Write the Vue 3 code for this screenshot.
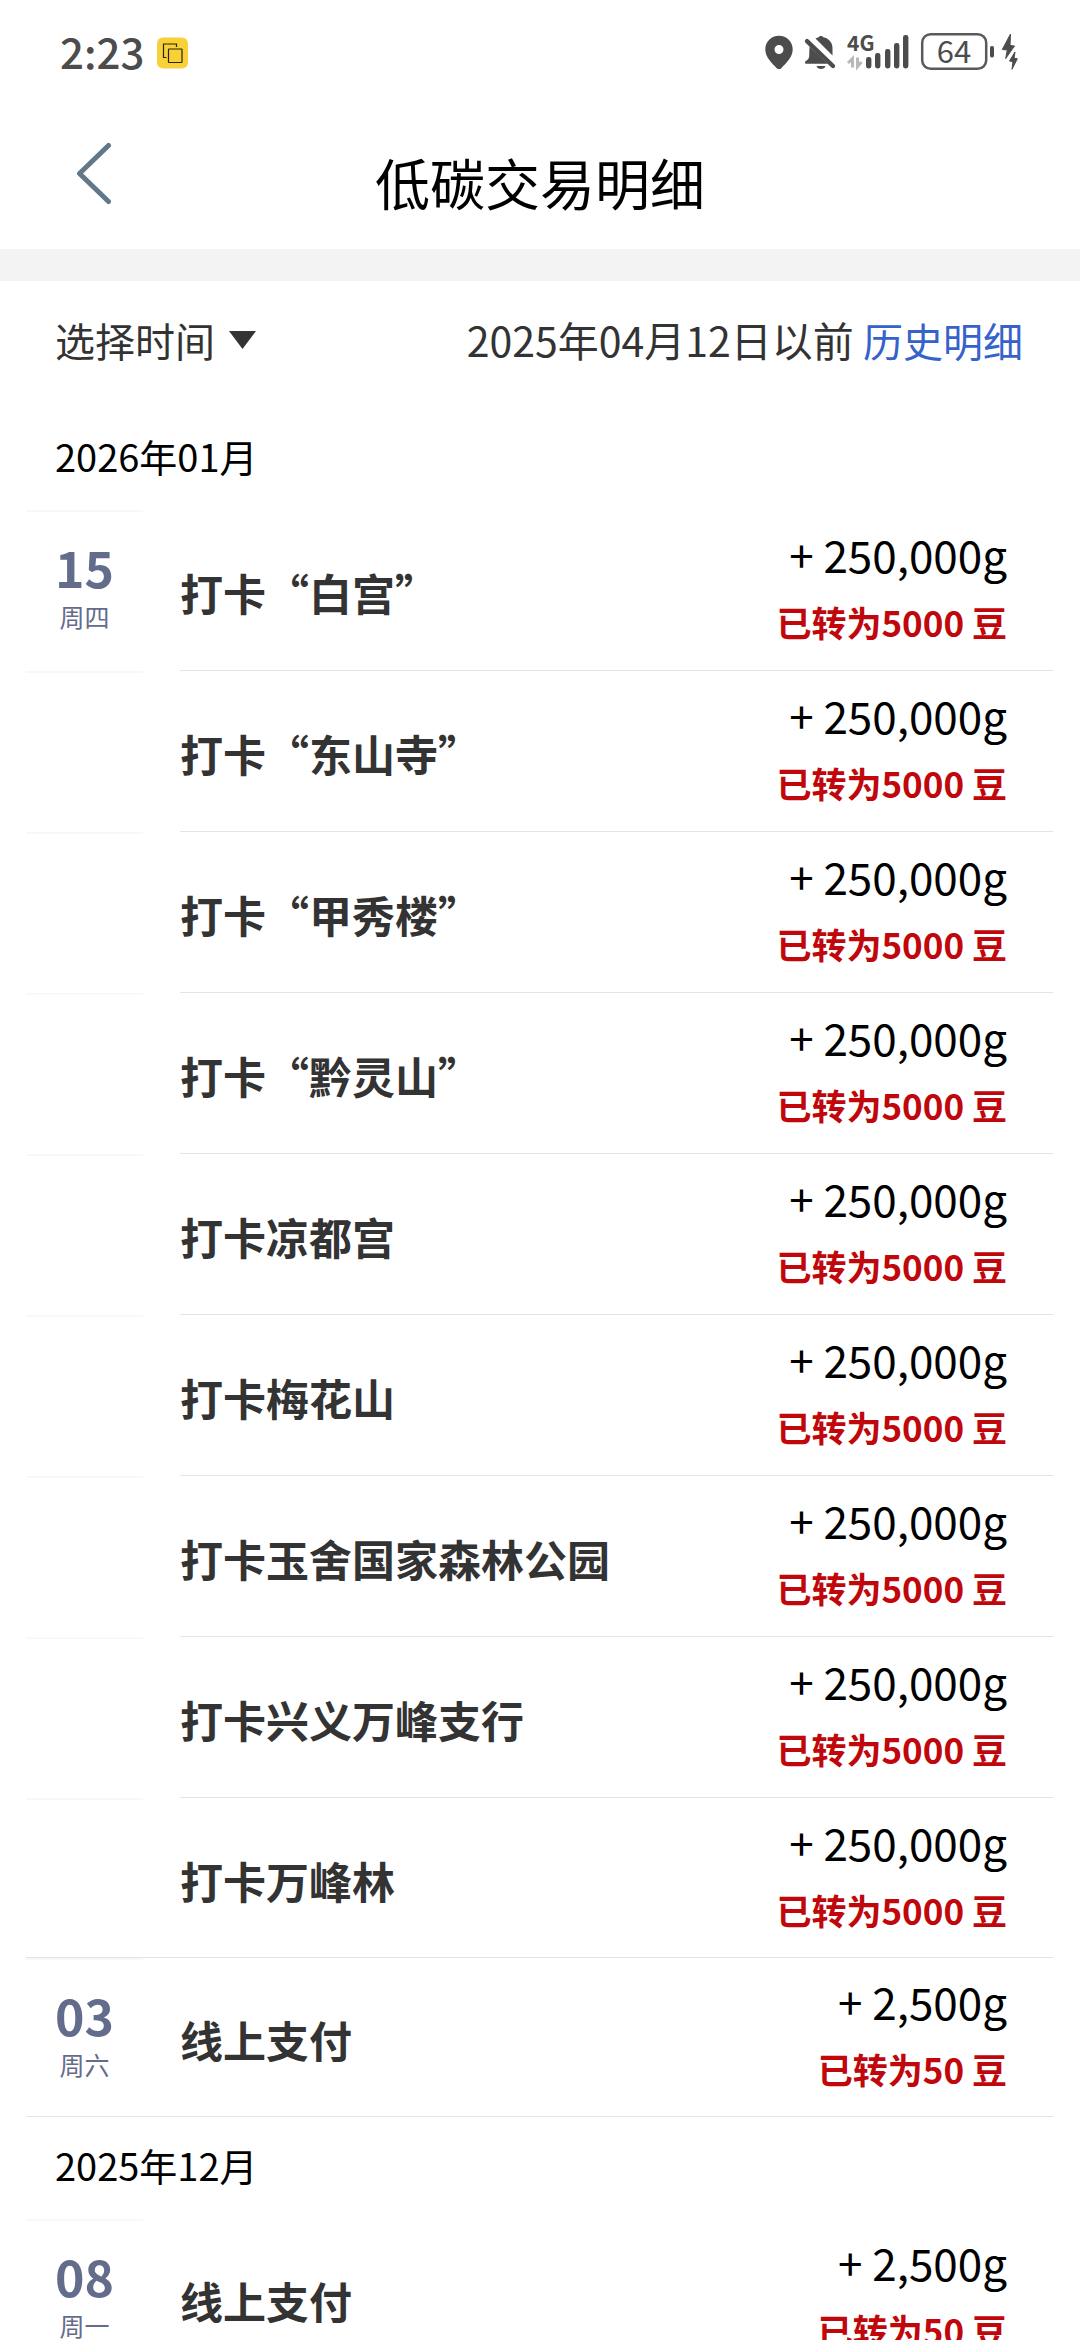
<script setup>
const bars = [
  { x: 866, y: 57 },
  { x: 875, y: 53 },
  { x: 885, y: 49 },
  { x: 894, y: 43 },
  { x: 903, y: 35 }
]

const checkIn = (title) => ({ title, amount: '250,000g', beans: 5000 })
const payment = () => ({ title: '线上支付', amount: '2,500g', beans: 50 })

const months = [
  {
    label: '2026年01月',
    days: [
      {
        day: '15',
        week: '周四',
        records: [
          checkIn('打卡“白宫”'),
          checkIn('打卡“东山寺”'),
          checkIn('打卡“甲秀楼”'),
          checkIn('打卡“黔灵山”'),
          checkIn('打卡凉都宫'),
          checkIn('打卡梅花山'),
          checkIn('打卡玉舍国家森林公园'),
          checkIn('打卡兴义万峰支行'),
          checkIn('打卡万峰林')
        ]
      },
      { day: '03', week: '周六', records: [payment()] }
    ]
  },
  {
    label: '2025年12月',
    days: [{ day: '08', week: '周一', records: [payment()] }]
  }
]
</script>

<template>
  <div class="app">
    <div class="status">
      <div class="status-left">
        <span class="clock">2:23</span>
        <svg class="badge" width="31" height="32" viewBox="0 0 31 32" aria-hidden="true">
          <rect width="31" height="31" y="0.5" rx="6" fill="#f8d038" />
          <g fill="none" stroke="#2b2408" stroke-width="1.2">
            <path d="M9.500 20.500H6.500V7H19.500V10" />
            <rect x="11.500" y="12" width="13.500" height="13.500" rx="0.5" />
          </g>
        </svg>
      </div>
      <svg width="256" height="60" viewBox="764 23 256 60" aria-hidden="true">
        <path fill="#4c4c4c" fill-rule="evenodd" d="M779 35.700c-7.800 0-13.700 6-13.700 13.500 0 8 6.700 14 11.200 18.700 1.500 1.600 3.500 1.600 5 0 4.500-4.700 11.200-10.700 11.200-18.700 0-7.500-5.900-13.500-13.700-13.500zm0 9.300a4.500 4.500 0 1 1 0 9 4.500 4.500 0 0 1 0-9z" />
        <g fill="#4c4c4c">
          <path d="M815.500 38.500c1-.6 2-1 3.200-1.200.9-1.900 3.700-1.900 4.600 0 5.500 1 9.200 5.200 9.200 10.700v7.500z" />
          <path d="M809.500 46.500L828 63.700H806.300c-1.600 0-1.800-2-.5-2.700 2.200-1.100 3.200-2.500 3.400-5z" />
          <path d="M816.500 66h9c-.8 4-8.200 4-9 0z" />
        </g>
        <path d="M807 41.200L833 66" fill="none" stroke="#4c4c4c" stroke-width="4.400" stroke-linecap="round" />
        <text x="847" y="51" class="net">4G</text>
        <g fill="none" stroke="#b9b9b9" stroke-width="3">
          <path d="M848 63L852.500 58.500V67.500" />
          <path d="M857.500 57.500V66.500L861.500 62" />
        </g>
        <rect v-for="b in bars" :key="b.x" :x="b.x" :y="b.y" width="5.400" :height="68.500 - b.y" rx="2.400" fill="#4c4c4c" />
        <rect x="922.200" y="34.200" width="64" height="34.600" rx="8.500" fill="none" stroke="#5a5a5a" stroke-width="2.500" />
        <text x="954" y="62.500" class="level">64</text>
        <rect x="990" y="46" width="4" height="11.500" rx="1.800" fill="#4c4c4c" />
        <g fill="#4c4c4c" stroke="#4c4c4c" stroke-width="1" stroke-linejoin="round">
          <path d="M1010.500 34L1002.300 49.500L1007.300 50L1005.700 58.500L1014.500 46L1010 45.500Z" />
          <path d="M1015 52L1009.500 61L1013 61.500L1012 69.300L1017.300 58.700L1014 58.300Z" />
        </g>
      </svg>
    </div>

    <header class="nav">
      <button class="back" type="button" aria-label="返回">
        <svg width="40" height="64" viewBox="0 0 40 64" fill="none" stroke="#60788a" stroke-width="5" stroke-linecap="round" stroke-linejoin="round" aria-hidden="true">
          <path d="M36.500 4.500L7.500 32.500L36.500 60.500" />
        </svg>
      </button>
      <h1 class="title">低碳交易明细</h1>
    </header>

    <main class="content">
      <div class="filter">
        <button class="picker" type="button">
          <span>选择时间</span>
          <svg width="27" height="18" viewBox="0 0 27 18" aria-hidden="true">
            <path d="M0 0H27L13.500 18Z" fill="#333" />
          </svg>
        </button>
        <p class="history">2025年04月12日以前 <a class="link" href="#history">历史明细</a></p>
      </div>

      <section v-for="m in months" :key="m.label">
        <h2 class="month">{{ m.label }}</h2>
        <ul
          v-for="d in m.days"
          :key="d.day"
          class="day-group"
          :class="{ single: d.records.length === 1 }"
        >
          <li v-for="(r, i) in d.records" :key="r.title" class="row">
            <div class="date">
              <template v-if="i === 0">
                <span class="day">{{ d.day }}</span>
                <span class="week">{{ d.week }}</span>
              </template>
            </div>
            <div class="record">
              <span class="name">{{ r.title }}</span>
              <div class="value">
                <span class="amount">+ {{ r.amount }}</span>
                <span class="beans">已转为{{ r.beans }} 豆</span>
              </div>
            </div>
          </li>
        </ul>
      </section>
    </main>
  </div>
</template>

<style>
body {
  margin: 0;
  background: #fff;
}
</style>

<style scoped>
.app {
  display: flex;
  flex-direction: column;
  height: 100vh;
  overflow: hidden;
  background: #fff;
  color: #000;
  font-family: "Noto Sans CJK SC", "Noto Sans", sans-serif;
}

button {
  border: 0;
  padding: 0;
  background: none;
  font: inherit;
  color: inherit;
}

h1,
h2,
p,
ul {
  margin: 0;
  padding: 0;
  font-weight: 400;
}

/* Status bar */
.status {
  display: flex;
  flex: none;
  justify-content: space-between;
  align-items: center;
  height: 106px;
  padding: 0 60px;
  box-sizing: border-box;
}

.status-left {
  display: flex;
  align-items: center;
  gap: 13px;
}

.clock {
  padding-bottom: 4px;
  color: #4c4c4c;
  font-size: 42px;
  line-height: 48px;
  font-weight: 500;
}

.net {
  fill: #4c4c4c;
  font-size: 21px;
  font-weight: 700;
}

.level {
  fill: #4c4c4c;
  font-size: 31px;
  font-weight: 400;
  text-anchor: middle;
}

/* Navigation bar */
.nav {
  display: grid;
  flex: none;
  grid-template-columns: 1fr auto 1fr;
  align-items: start;
  padding: 35px 0 28px;
  border-bottom: 32px solid #f3f3f3;
}

.back {
  justify-self: start;
  display: flex;
  padding-left: 72px;
}

.title {
  font-size: 55px;
  line-height: 80px;
}

.content {
  flex: 1;
  min-height: 0;
  overflow: auto;
  scrollbar-width: none;
}

/* Filter bar */
.filter {
  display: flex;
  justify-content: space-between;
  padding: 30px 57px 40px 55px;
  color: #333;
  font-size: 40px;
  line-height: 56px;
}

.picker {
  display: flex;
  align-items: center;
  gap: 14px;
}

.history {
  font-size: 41px;
}

.link {
  color: #3662cc;
  font-size: 40px;
  text-decoration: none;
}

/* Record list */
.month {
  padding: 24px 55px 30px;
  font-size: 38px;
  line-height: 48px;
}

.day-group {
  margin: 0 27px 0 26px;
  border-bottom: 1px solid #e4e4e4;
  list-style: none;
}

.row {
  display: flex;
  gap: 37px;
}

.date {
  display: flex;
  flex: none;
  flex-direction: column;
  align-items: center;
  width: 117px;
  padding-top: 24px;
  border-top: 2px solid #f8f8f8;
  box-sizing: border-box;
  color: #646c8c;
}

.day {
  font-size: 50px;
  line-height: 60px;
  font-weight: 700;
}

.week {
  margin-top: 5px;
  font-size: 25px;
  line-height: 30px;
}

.record {
  display: flex;
  flex: 1;
  align-items: center;
  justify-content: space-between;
  padding: 18px 46px 24px 0;
  border-bottom: 1px solid #e4e4e4;
}

.row:last-child .record {
  padding-bottom: 23px;
  border-bottom: 0;
}

.single .row:last-child .record {
  padding: 17px 46px 23px 0;
}

.name {
  padding-top: 10px;
  color: #333;
  font-size: 43px;
  line-height: 60px;
  font-weight: 700;
}

.value {
  display: flex;
  flex-direction: column;
  align-items: flex-end;
  gap: 18px;
}

.amount {
  font-size: 44px;
  line-height: 52px;
}

.beans {
  color: #c0070c;
  font-size: 35px;
  line-height: 48px;
  font-weight: 700;
}
</style>
